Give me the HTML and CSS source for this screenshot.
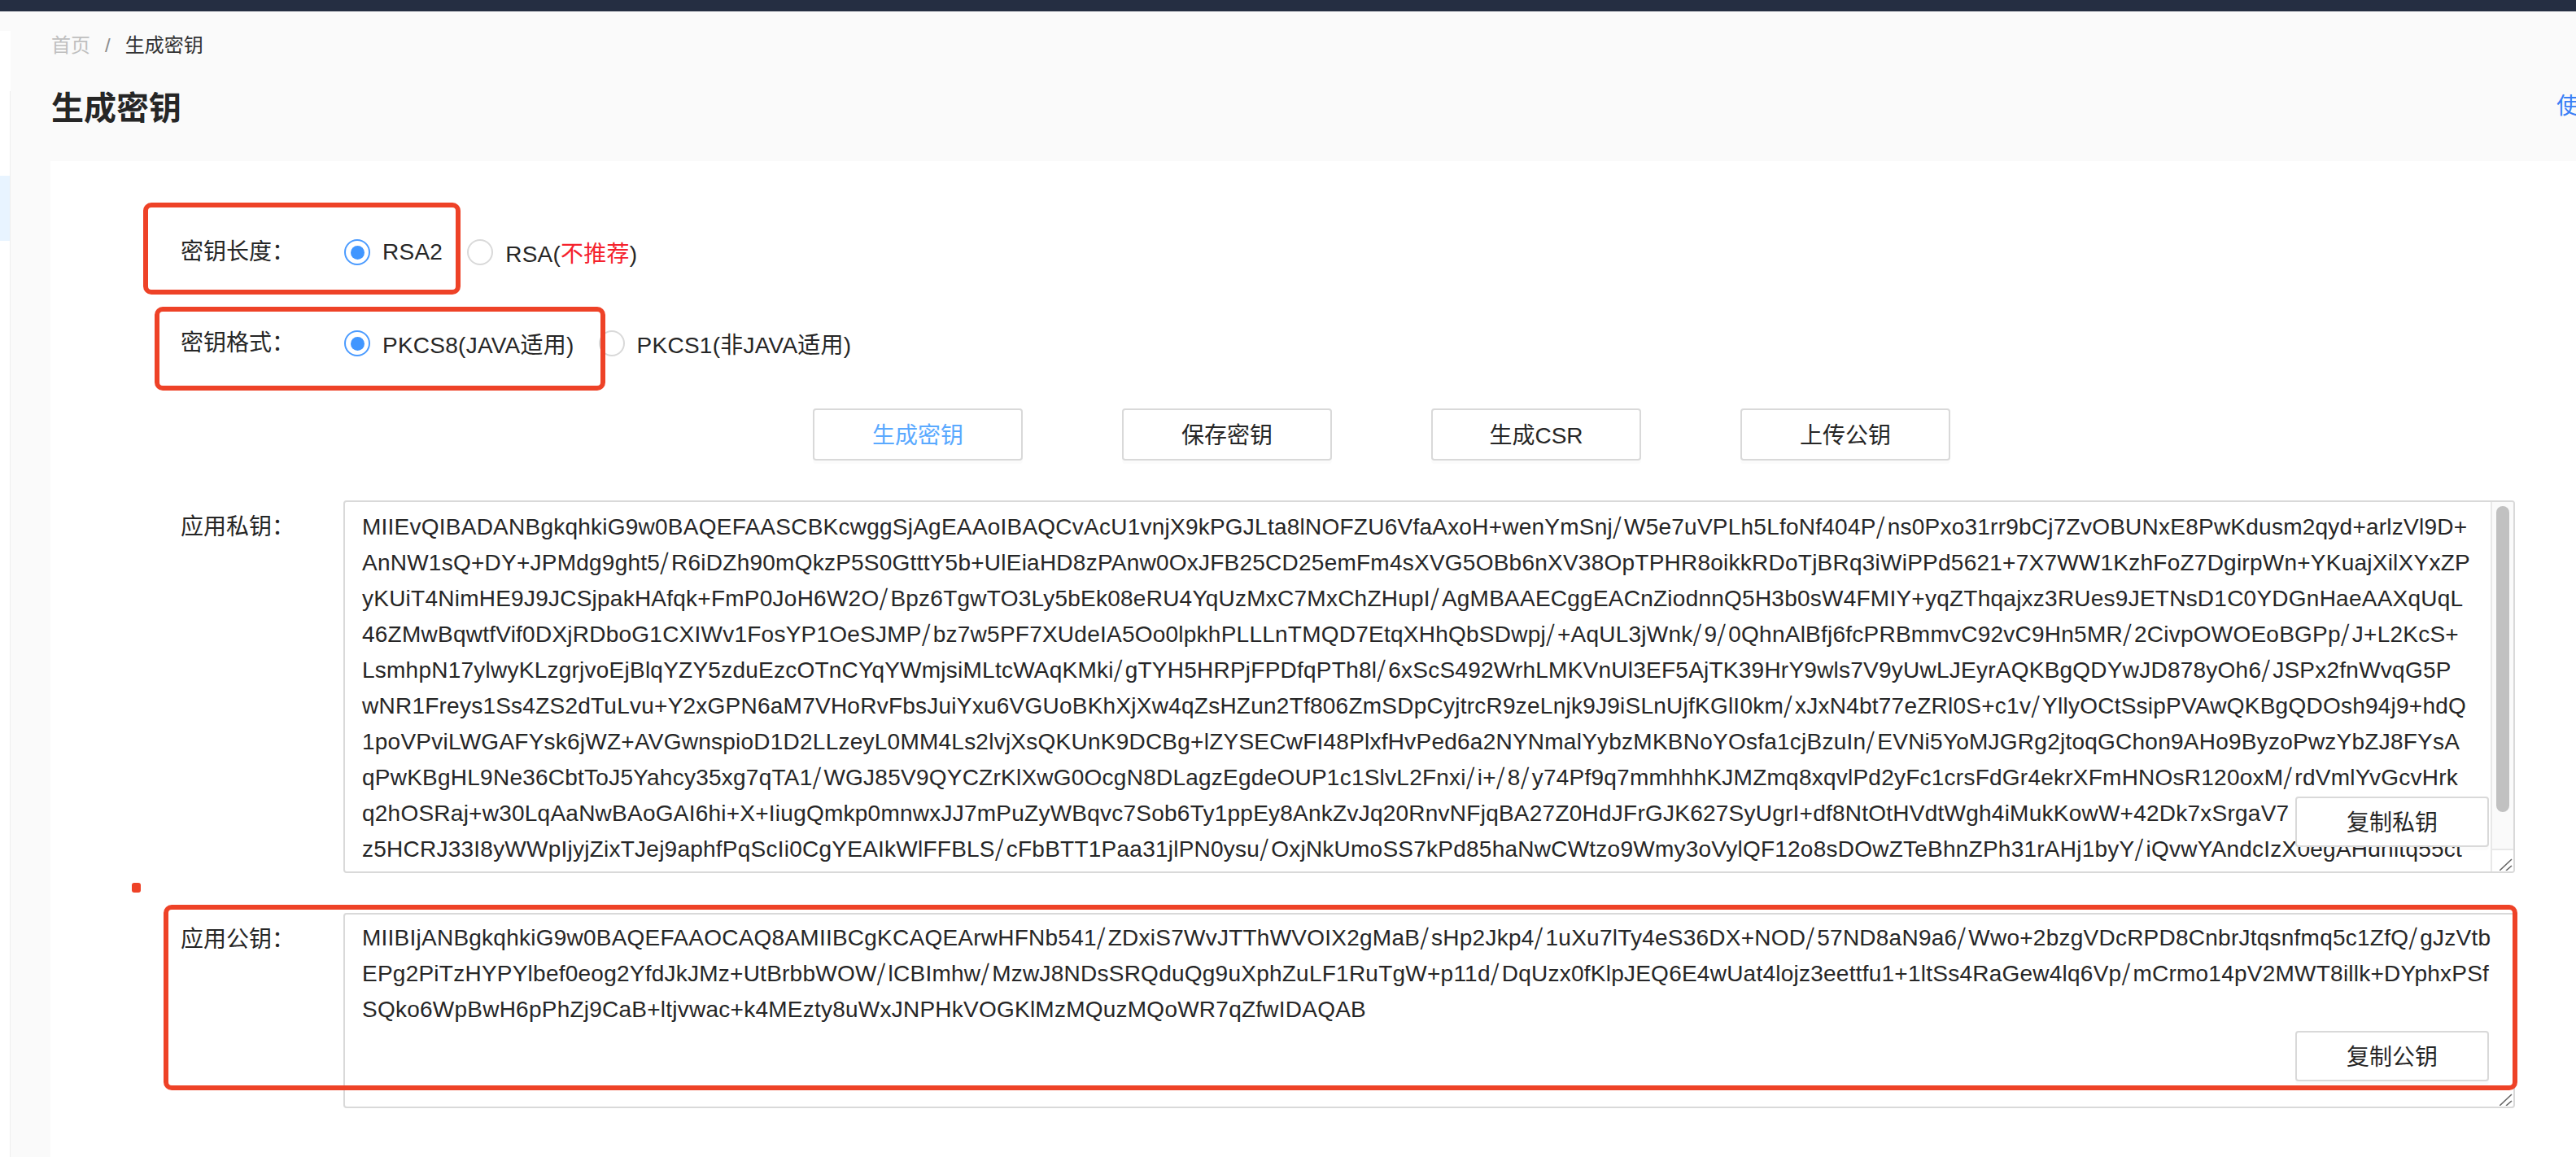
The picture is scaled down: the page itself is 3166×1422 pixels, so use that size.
FILE: index.html
```html
<!DOCTYPE html>
<html lang="zh-CN">
<head>
<meta charset="utf-8">
<title>生成密钥</title>
<link rel="stylesheet" href="styles.css">
</head>
<body>
<div class="app">
  <header class="topbar"></header>
  <div class="layout">
    <aside class="sidebar">
      <div class="side-top"></div>
      <nav class="side-nav"><div class="side-active"></div></nav>
    </aside>
    <main class="main">
      <div class="crumbs"><span class="crumb-link">首页</span><span class="crumb-sep">/</span><span class="crumb-now">生成密钥</span></div>
      <div class="title-row">
        <h1 class="title">生成密钥</h1>
        <a class="guide">使用说明</a>
      </div>
      <section class="card">
        <div class="row row-radio">
          <div class="label">密钥长度：</div>
          <div class="radios">
            <label class="radio"><span class="dot on"></span><span>RSA2</span></label>
            <label class="radio"><span class="dot"></span><span>RSA(<em class="warn">不推荐</em>)</span></label>
          </div>
        </div>
        <div class="row row-radio">
          <div class="label">密钥格式：</div>
          <div class="radios">
            <label class="radio"><span class="dot on"></span><span>PKCS8(JAVA适用)</span></label>
            <label class="radio"><span class="dot"></span><span>PKCS1(非JAVA适用)</span></label>
          </div>
        </div>
        <div class="actions">
          <button class="btn btn-active">生成密钥</button>
          <button class="btn">保存密钥</button>
          <button class="btn">生成CSR</button>
          <button class="btn">上传公钥</button>
        </div>
        <div class="row">
          <div class="label label-key">应用私钥：</div>
          <div class="keybox keybox-private">
            <div class="keytext">
              <div class="ln">MIIEvQIBADANBgkqhkiG9w0BAQEFAASCBKcwggSjAgEAAoIBAQCvAcU1vnjX9kPGJLta8lNOFZU6VfaAxoH+wenYmSnj<i class="sl">/</i>W5e7uVPLh5LfoNf404P<i class="sl">/</i>ns0Pxo31rr9bCj7ZvOBUNxE8PwKdusm2qyd+arlzVl9D+</div>
              <div class="ln">AnNW1sQ+DY+JPMdg9ght5<i class="sl">/</i>R6iDZh90mQkzP5S0GtttY5b+UlEiaHD8zPAnw0OxJFB25CD25emFm4sXVG5OBb6nXV38OpTPHR8oikkRDoTjBRq3iWiPPd5621+7X7WW1KzhFoZ7DgirpWn+YKuajXilXYxZP</div>
              <div class="ln">yKUiT4NimHE9J9JCSjpakHAfqk+FmP0JoH6W2O<i class="sl">/</i>Bpz6TgwTO3Ly5bEk08eRU4YqUzMxC7MxChZHupI<i class="sl">/</i>AgMBAAECggEACnZiodnnQ5H3b0sW4FMIY+yqZThqajxz3RUes9JETNsD1C0YDGnHaeAAXqUqL</div>
              <div class="ln">46ZMwBqwtfVif0DXjRDboG1CXIWv1FosYP1OeSJMP<i class="sl">/</i>bz7w5PF7XUdeIA5Oo0lpkhPLLLnTMQD7EtqXHhQbSDwpj<i class="sl">/</i>+AqUL3jWnk<i class="sl">/</i>9<i class="sl">/</i>0QhnAlBfj6fcPRBmmvC92vC9Hn5MR<i class="sl">/</i>2CivpOWOEoBGPp<i class="sl">/</i>J+L2KcS+</div>
              <div class="ln">LsmhpN17ylwyKLzgrjvoEjBlqYZY5zduEzcOTnCYqYWmjsiMLtcWAqKMki<i class="sl">/</i>gTYH5HRPjFPDfqPTh8l<i class="sl">/</i>6xScS492WrhLMKVnUl3EF5AjTK39HrY9wls7V9yUwLJEyrAQKBgQDYwJD878yOh6<i class="sl">/</i>JSPx2fnWvqG5P</div>
              <div class="ln">wNR1Freys1Ss4ZS2dTuLvu+Y2xGPN6aM7VHoRvFbsJuiYxu6VGUoBKhXjXw4qZsHZun2Tf806ZmSDpCyjtrcR9zeLnjk9J9iSLnUjfKGlI0km<i class="sl">/</i>xJxN4bt77eZRl0S+c1v<i class="sl">/</i>YllyOCtSsipPVAwQKBgQDOsh94j9+hdQ</div>
              <div class="ln">1poVPviLWGAFYsk6jWZ+AVGwnspioD1D2LLzeyL0MM4Ls2lvjXsQKUnK9DCBg+lZYSECwFI48PlxfHvPed6a2NYNmalYybzMKBNoYOsfa1cjBzuIn<i class="sl">/</i>EVNi5YoMJGRg2jtoqGChon9AHo9ByzoPwzYbZJ8FYsA</div>
              <div class="ln">qPwKBgHL9Ne36CbtToJ5Yahcy35xg7qTA1<i class="sl">/</i>WGJ85V9QYCZrKlXwG0OcgN8DLagzEgdeOUP1c1SlvL2Fnxi<i class="sl">/</i>i+<i class="sl">/</i>8<i class="sl">/</i>y74Pf9q7mmhhhKJMZmq8xqvlPd2yFc1crsFdGr4ekrXFmHNOsR120oxM<i class="sl">/</i>rdVmlYvGcvHrk</div>
              <div class="ln">q2hOSRaj+w30LqAaNwBAoGAI6hi+X+IiugQmkp0mnwxJJ7mPuZyWBqvc7Sob6Ty1ppEy8AnkZvJq20RnvNFjqBA27Z0HdJFrGJK627SyUgrI+df8NtOtHVdtWgh4iMukKowW+42Dk7xSrgaV7</div>
              <div class="ln">z5HCRJ33I8yWWpIjyjZixTJej9aphfPqScIi0CgYEAIkWlFFBLS<i class="sl">/</i>cFbBTT1Paa31jlPN0ysu<i class="sl">/</i>OxjNkUmoSS7kPd85haNwCWtzo9Wmy3oVylQF12o8sDOwZTeBhnZPh31rAHj1byY<i class="sl">/</i>iQvwYAndcIzX0egAHdhitq55ct</div>
            </div>
            <div class="scrollbar">
              <div class="track"><div class="thumb"></div></div>
              <div class="corner">
                <svg class="grip" viewBox="0 0 16 15" width="16" height="15"><path d="M0 15 15 1M8 15l7-6" fill="none" stroke="#666" stroke-width="1.6"/></svg>
              </div>
            </div>
            <button class="btn btn-copy">复制私钥</button>
          </div>
        </div>
        <div class="row">
          <div class="label label-key">应用公钥：</div>
          <div class="keybox keybox-public">
            <div class="keytext">
              <div class="ln">MIIBIjANBgkqhkiG9w0BAQEFAAOCAQ8AMIIBCgKCAQEArwHFNb541<i class="sl">/</i>ZDxiS7WvJTThWVOIX2gMaB<i class="sl">/</i>sHp2Jkp4<i class="sl">/</i>1uXu7lTy4eS36DX+NOD<i class="sl">/</i>57ND8aN9a6<i class="sl">/</i>Wwo+2bzgVDcRPD8CnbrJtqsnfmq5c1ZfQ<i class="sl">/</i>gJzVtb</div>
              <div class="ln">EPg2PiTzHYPYlbef0eog2YfdJkJMz+UtBrbbWOW<i class="sl">/</i>lCBImhw<i class="sl">/</i>MzwJ8NDsSRQduQg9uXphZuLF1RuTgW+p11d<i class="sl">/</i>DqUzx0fKlpJEQ6E4wUat4lojz3eettfu1+1ltSs4RaGew4lq6Vp<i class="sl">/</i>mCrmo14pV2MWT8illk+DYphxPSf</div>
              <div class="ln">SQko6WpBwH6pPhZj9CaB+ltjvwac+k4MEzty8uWxJNPHkVOGKlMzMQuzMQoWR7qZfwIDAQAB</div>
            </div>
            <svg class="grip grip-abs" viewBox="0 0 16 15" width="16" height="15"><path d="M0 15 15 1M8 15l7-6" fill="none" stroke="#666" stroke-width="1.6"/></svg>
            <button class="btn btn-copy">复制公钥</button>
          </div>
        </div>
      </section>
    </main>
  </div>
  <div class="mark mark-length"></div>
  <div class="mark mark-format"></div>
  <div class="mark mark-public"></div>
  <div class="mark-dot"></div>
</div>
</body>
</html>
```
FILE: styles.css
```css
* { box-sizing: border-box; }
html, body { margin: 0; height: 100%; }
body {
  background: #fafafa;
  color: #262626;
  font-family: "Liberation Sans", "Noto Sans CJK SC", sans-serif;
  font-size: 28px;
}
.app { position: relative; height: 100vh; overflow: hidden; display: flex; flex-direction: column; }
.topbar { height: 14px; background: #252e42; flex: none; }
.layout { flex: 1; display: flex; min-height: 0; }

.sidebar { width: 13px; flex: none; margin-top: 24px; display: flex; flex-direction: column; }
.side-top { height: 74px; background: #fff; }
.side-nav { flex: 1; background: #fff; border-right: 1px solid #eee; padding-top: 104px; }
.side-active { height: 80px; background: #e8f4ff; }

.main { flex: 1; min-width: 0; display: flex; flex-direction: column; }
.crumbs { margin: 24px 0 0 50px; height: 36px; line-height: 36px; font-size: 24px; display: flex; }
.crumb-link { color: #bfbfbf; }
.crumb-sep { color: #8c8c8c; margin: 0 18px; }
.crumb-now { color: #333; }
.title-row { margin: 31px 0 0 50px; height: 56px; display: flex; align-items: center; justify-content: space-between; }
.title { margin: 0; font-size: 40px; line-height: 56px; font-weight: 600; color: #262626; }
.guide { color: #3a7ff6; white-space: nowrap; margin-right: -88px; flex: none; margin-top: -10px; }

.card { flex: 1; margin: 37px 0 0 49px; background: #fff; padding: 80px 0 0 160px; }
.row { display: grid; grid-template-columns: 200px 2669px; margin-bottom: 49px; }
.row-radio { margin-bottom: 48px; height: 64px; align-items: center; }
.label { color: #262626; white-space: nowrap; line-height: 64px; }
.label-key { line-height: 44px; padding-top: 11px; }
.radios { display: flex; gap: 30px; margin-left: 1px; }
.radio { display: inline-flex; align-items: center; gap: 15px; white-space: nowrap; letter-spacing: .25px; }
.dot { width: 32px; height: 32px; border-radius: 50%; border: 2px solid #d9d9d9; display: block; position: relative; background: #fff; }
.dot.on { border-color: #4b9bff; }
.dot.on::after { content: ""; position: absolute; inset: 5.5px; border-radius: 50%; background: #4096ff; }
.warn { color: #f5222d; font-style: normal; }

.actions { display: flex; gap: 122px; margin: 0 0 49px 777px; }
.btn {
  font: inherit; color: #262626; background: #fff;
  border: 2px solid #d9d9d9; border-radius: 4px;
  box-shadow: 0 4px 0 rgba(0,0,0,.015);
  width: 258px; height: 64px; padding: 0 0 2px;
}
.btn-active { color: #5aa9ff; }
.btn-copy { position: absolute; right: 30px; width: 238px; height: 62px; }

.keybox { position: relative; border: 2px solid #d9d9d9; border-radius: 4px; display: flex; overflow: hidden; background: #fff; }
.keybox-private { height: 458px; }
.keybox-public { height: 240px; }
.keybox-private .btn-copy { top: 362px; }
.keybox-public .btn-copy { top: 143px; }
.keytext { flex: 1; min-width: 0; padding: 9px 0 0 21px; overflow: hidden; color: #262626; letter-spacing: .24px; }
.keybox-public .keytext { padding-top: 7px; }
.ln { height: 44px; line-height: 44px; white-space: nowrap; }
.sl { font-family: "Noto Sans CJK SC", sans-serif; font-style: normal; letter-spacing: 3px; line-height: 0; }

.scrollbar { width: 28px; flex: none; border-left: 2px solid #e8e8e8; background: #fafafa; display: flex; flex-direction: column; }
.track { flex: 1; padding: 5px 5px 0; }
.thumb { height: 376px; border-radius: 8px; background: #c1c1c1; }
.corner { height: 28px; background: #fff; border-top: 2px solid #e8e8e8; position: relative; }
.grip { display: block; position: absolute; right: 1px; bottom: 1px; }
.grip-abs { right: 1px; bottom: 1px; }

.mark { position: absolute; border: 6px solid #ee4227; border-radius: 10px; pointer-events: none; }
.mark-length { left: 176px; top: 249px; width: 390px; height: 113px; }
.mark-format { left: 190px; top: 377px; width: 554px; height: 103px; }
.mark-public { left: 201px; top: 1112px; width: 2893px; height: 228px; }
.mark-dot { position: absolute; left: 162px; top: 1085px; width: 11px; height: 12px; border-radius: 3px; background: #ee4227; }
```
